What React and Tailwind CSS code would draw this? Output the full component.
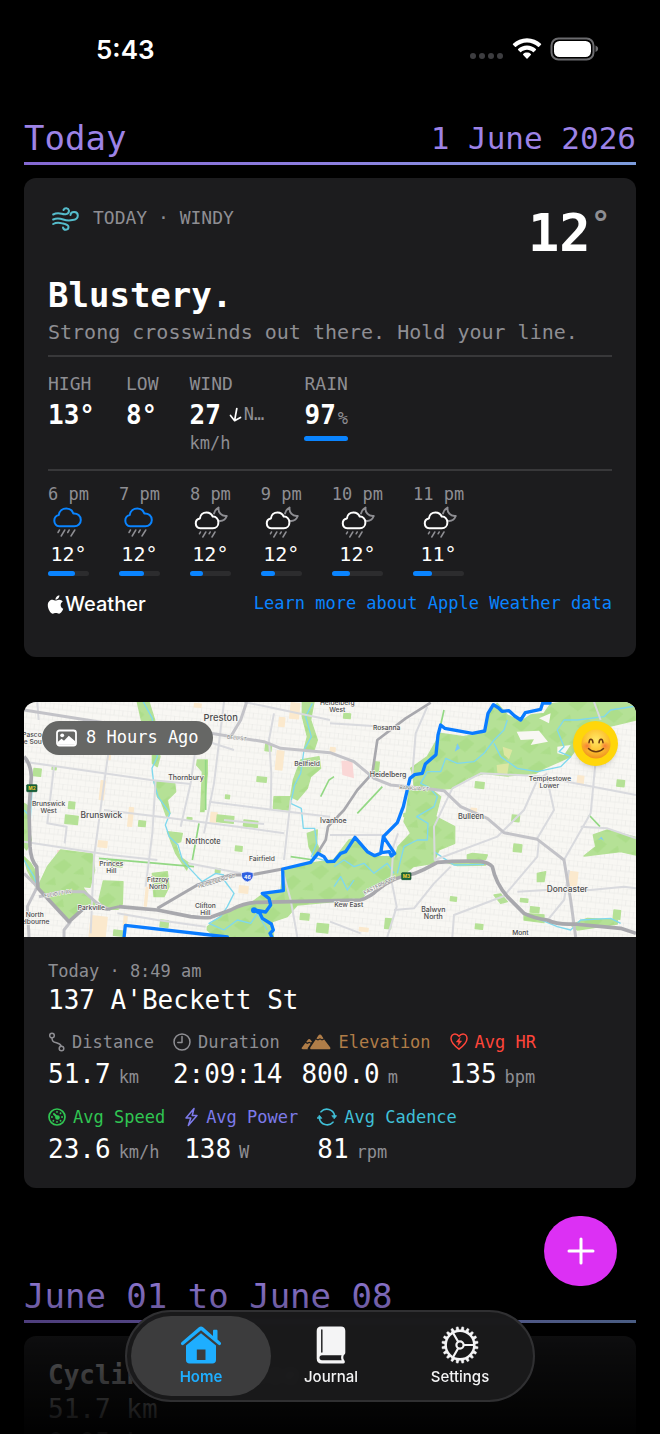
import React from "react";
import { FaApple } from "react-icons/fa";

const mono = "font-['DejaVu_Sans_Mono',monospace]";

const hours = [
  { time: "6 pm", temp: "12°", rain: 67, night: false },
  { time: "7 pm", temp: "12°", rain: 62, night: false },
  { time: "8 pm", temp: "12°", rain: 31, night: true },
  { time: "9 pm", temp: "12°", rain: 35, night: true },
  { time: "10 pm", temp: "12°", rain: 35, night: true },
  { time: "11 pm", temp: "11°", rain: 37, night: true },
];

function StatusBar() {
  return (
    <div className="flex h-[98px] shrink-0 items-center justify-between pr-[60px] pl-24">
      <span className="font-[Inter,sans-serif] text-[26px] font-semibold text-white">5:43</span>
      <div className="flex items-center gap-2">
        <svg width="36" height="24" viewBox="0 0 36 24" className="fill-[#3d3d40]" aria-hidden="true">
          <circle cx="5" cy="19" r="3" />
          <circle cx="14" cy="19" r="3" />
          <circle cx="23" cy="19" r="3" />
          <circle cx="32" cy="19" r="3" />
        </svg>
        <svg width="30" height="24" viewBox="0 0 30 24" className="fill-white" aria-hidden="true">
          <path d="M15 1.2c5.500 0 10.400 2.100 14 5.600.3.300.3.700 0 1l-2 2c-.3.300-.7.300-1 0C23 7 19.200 5.400 15 5.400S7 7 4 9.800c-.3.300-.7.300-1 0l-2-2c-.3-.3-.3-.7 0-1C4.600 3.300 9.500 1.200 15 1.200z" />
          <path d="M15 8.500c3.400 0 6.500 1.300 8.900 3.500.3.300.3.700 0 1l-2.100 2.100c-.3.300-.6.300-.9 0-1.600-1.400-3.600-2.300-5.900-2.300s-4.300.9-5.900 2.300c-.3.300-.6.300-.9 0L6.100 13c-.3-.3-.3-.7 0-1 2.400-2.200 5.500-3.500 8.900-3.500z" />
          <path d="M15 15.500c1.500 0 2.800.5 3.800 1.400.3.300.3.700 0 1l-3.300 3.500c-.3.300-.7.300-1 0l-3.300-3.500c-.3-.3-.3-.7 0-1 1-.9 2.300-1.400 3.800-1.400z" />
        </svg>
        <svg width="50" height="24" viewBox="0 0 50 24" aria-hidden="true">
          <rect x="1.500" y="1.500" width="42" height="21" rx="7" fill="none" stroke="#6b6b6e" strokeWidth="2" />
          <rect x="4" y="4" width="37" height="16" rx="5.500" fill="#fff" />
          <path d="M45.500 8.500c2 .8 2.600 2 2.600 3.200s-.6 2.400-2.600 3.200z" fill="#6b6b6e" />
        </svg>
      </div>
    </div>
  );
}

function SectionHeader({ title, aside }) {
  return (
    <header>
      <div className="flex h-10 items-center justify-between text-[#9d83e6]">
        <h2 className="text-[34px] leading-10">{title}</h2>
        {aside && <span className="text-[31px] leading-10">{aside}</span>}
      </div>
      <div className="mt-1 h-[3px] bg-linear-to-r from-[#8468d2] via-[#8d7fe0] to-[#7c9cdc]" />
    </header>
  );
}

function WindIcon() {
  return (
    <svg width="27" height="25" viewBox="0 0 27 25" fill="none" stroke="#55bccb" strokeWidth="2" strokeLinecap="round" strokeLinejoin="round" aria-hidden="true">
      <path d="M1.200 8.500c3-1.600 6-1.400 8.500-.7 2.500.7 7.300 1.200 7.300-3.200A2.900 2.900 0 0 0 11.500 4" />
      <path d="M1.200 13.500c4-1.800 7-1 10 0 5 1.600 14.800 1.300 14.600-4 0-4.500-7-4.700-7.300-.5" />
      <path d="M1.200 18c3.500-2 6-1.600 9-.6 3.500.8 6.300 1.200 6.300 3.700 0 3.500-5 3.400-5.500.4" />
    </svg>
  );
}

function RainIcon({ night }) {
  if (night) {
    return (
      <svg width="36" height="32" viewBox="0 0 36 32" fill="none" strokeLinecap="round" strokeLinejoin="round" aria-hidden="true">
        <path d="M22 7.500c.6-2.500 2.300-4.700 4.600-5.900-.8 4.500 2.600 9 8.200 8.400-1.300 3.200-4.300 5.200-7.500 4.900" stroke="#8e8e93" strokeWidth="1.900" />
        <path d="M8.300 22.300a5 5 0 0 1-.4-9.900c.4-3.700 3.200-6 6.500-6 3 0 5.400 1.700 6.300 4.200 3.200-.3 5.700 2.300 5.700 5.800 0 3.400-2.400 5.900-5.600 5.900z" stroke="#fff" strokeWidth="2" />
        <path d="M8.500 26l-1.100 1.800M13.800 26l-3 5M18.200 26l-1.100 1.800M23 26l-3 5" stroke="#8e8e93" strokeWidth="1.500" />
      </svg>
    );
  }
  return (
    <svg width="36" height="32" viewBox="0 0 36 32" fill="none" strokeLinecap="round" strokeLinejoin="round" aria-hidden="true">
      <path d="M9.300 20.300a5.700 5.700 0 0 1-.6-11.200C9.200 5 12.500 2.500 16.300 2.500c3.500 0 6 2 7 4.900 4.200-.3 7.500 2.600 7.500 6.500 0 3.700-2.900 6.400-6.500 6.400z" stroke="#0a84ff" strokeWidth="2" />
      <path d="M9.500 24l-1.500 2.500M14.800 24l-3.600 6M19.200 24l-1.500 2.500M24.800 24l-3.800 6" stroke="#8e8e93" strokeWidth="1.500" />
    </svg>
  );
}

function WeatherCard() {
  return (
    <section className="mt-[13px] rounded-xl bg-[#1c1c1e] px-6 pt-6 pb-[41px]">
      <div className="flex h-[69px] items-start justify-between">
        <div className="flex h-8 items-center gap-[14px] pl-1">
          <WindIcon />
          <span className="text-lg text-[#8e8e93]">TODAY · WINDY</span>
        </div>
        <div className="flex items-start pr-px">
          <span className="text-[52px] leading-[62px] font-bold text-white">12</span>
          <span className="mt-px text-[34px] leading-10 font-bold text-[#8e8e93]">°</span>
        </div>
      </div>
      <h3 className="text-[34px] leading-[48px] font-bold text-white">Blustery.</h3>
      <p className="text-xl leading-[26px] text-[#8e8e93]">Strong crosswinds out there. Hold your line.</p>
      <div className="mt-[10px] h-[2px] bg-[#38383a]" />

      <div className="mt-[15px] flex items-start gap-[31px]">
        <div>
          <div className="text-lg leading-6 text-[#8e8e93]">HIGH</div>
          <div className="text-[26px] leading-[38px] font-bold text-white">13°</div>
        </div>
        <div>
          <div className="text-lg leading-6 text-[#8e8e93]">LOW</div>
          <div className="text-[26px] leading-[38px] font-bold text-white">8°</div>
        </div>
        <div className="w-[84px]">
          <div className="text-lg leading-6 text-[#8e8e93]">WIND</div>
          <div className="flex items-center">
            <span className="text-[26px] leading-[38px] font-bold text-white">27</span>
            <svg width="14" height="16" viewBox="0 0 14 16" fill="none" stroke="#fff" strokeWidth="1.700" strokeLinecap="round" strokeLinejoin="round" className="ml-2 shrink-0" aria-hidden="true">
              <path d="M7.800 1.500L5.600 13.500M1.500 8.500l4.100 5.200 5.900-3.300" />
            </svg>
            <span className="ml-px text-[17px] text-[#8e8e93]">N…</span>
          </div>
          <div className="text-[17px] leading-[18px] text-[#8e8e93]">km/h</div>
        </div>
        <div>
          <div className="text-lg leading-6 text-[#8e8e93]">RAIN</div>
          <div className="flex items-baseline gap-[2px]">
            <span className="text-[26px] leading-[38px] font-bold text-white">97</span>
            <span className="text-[17px] leading-none text-[#8e8e93]">%</span>
          </div>
          <div className="mt-[2px] h-[5px] w-11 rounded-full bg-[#0a84ff]" />
        </div>
      </div>
      <div className="mt-[17px] h-[2px] bg-[#38383a]" />

      <ul className="mt-[11px] flex gap-[30px]">
        {hours.map((h) => (
          <li key={h.time} className="flex flex-col items-center">
            <span className="text-[17px] leading-6 text-[#8e8e93]">{h.time}</span>
            <RainIcon night={h.night} />
            <span className="text-xl leading-8 text-white">{h.temp}</span>
            <div className="mt-px h-[5px] w-full rounded-full bg-[#2c2c2e]">
              <div className="h-full rounded-full bg-[#0a84ff]" style={{ width: `${h.rain}%` }} />
            </div>
          </li>
        ))}
      </ul>

      <div className="mt-4 flex h-6 items-center justify-between">
        <div className="flex items-center text-white">
          <FaApple size={21} className="-mr-px -ml-[3px]" aria-hidden="true" />
          <span className="font-[Inter,sans-serif] text-xl leading-6 font-medium">Weather</span>
        </div>
        <a href="#weather-data" className="text-[17px] text-[#0a84ff]">Learn more about Apple Weather data</a>
      </div>
    </section>
  );
}

const parks = [
  "70,500 110,450 205,462 212,510 198,562 175,560 215,615 180,625 150,650 135,665 60,585 42,560",
  "238,543 297,545 295,612 282,628 245,628 225,600",
  "340,6 375,6 392,60 395,120 408,170 400,200 385,190 385,130 352,60",
  "390,245 452,248 455,275 430,300 438,340 428,350 412,305 400,290",
  "430,395 475,400 470,425 455,430 468,470 495,490 488,510 455,460",
  "385,520 430,515 435,560 420,590 390,590",
  "520,180 550,180 550,220 540,335 530,335 535,215 518,195",
  "835,6 870,6 860,60 880,120 870,150 840,150 850,110 835,50",
  "830,180 885,170 890,205 860,230 850,265 820,300 800,290 808,240",
  "750,290 798,290 795,330 748,325",
  "850,400 880,390 878,430 890,455 870,470 855,440",
  "550,680 600,640 680,610 720,580 770,575 778,510 870,488 930,478 975,420 993,415 1050,470 1108,470 1108,520 1060,550 1010,590 930,605 820,615 790,650 745,665 748,711 575,711 550,690",
  "1168,230 1160,205 1210,170 1250,100 1318,110 1385,98 1398,30 1420,10 1450,45 1490,65 1520,45 1560,40 1580,12 1620,6 1836,6 1836,60 1760,78 1690,90 1668,130 1640,170 1560,205 1535,220 1450,228 1380,220 1330,235 1285,265 1245,268 1220,262 1170,260",
  "1155,272 1218,265 1250,290 1235,350 1292,380 1292,430 1245,450 1228,490 1168,500 1130,530 1040,560 1010,600 980,590 1105,500 1122,440 1160,400 1140,365 1148,330",
  "1708,405 1750,390 1836,412 1836,465 1790,455 1680,468 1715,440",
  "0,310 15,320 12,370 22,420 8,450 0,440",
  "0,470 20,490 45,530 35,560 10,510",
  "1260,485 1380,485 1385,495 1300,497",
  "1500,640 1560,645 1560,668 1500,660",
  "1640,675 1690,655 1780,660 1780,672 1660,690",
  "1330,465 1345,460 1390,465 1385,478 1330,480",
  "1540,520 1565,515 1560,545 1540,545",
  "1410,585 1430,582 1450,605 1430,610",
];

const patches = [
  [30, 205, 22, 22], [125, 345, 38, 25], [135, 305, 18, 20], [345, 362, 20, 16], [580, 345, 50, 20],
  [660, 360, 42, 18], [725, 132, 18, 20], [700, 230, 28, 14], [635, 438, 20, 14], [262, 480, 34, 18],
  [575, 505, 14, 12], [490, 352, 14, 8], [250, 130, 10, 12], [605, 285, 12, 10], [410, 660, 24, 20],
  [270, 690, 30, 16], [190, 600, 14, 12], [830, 640, 26, 18], [880, 670, 34, 26], [1050, 185, 16, 34],
  [1355, 245, 26, 18], [1465, 345, 22, 18], [1470, 432, 24, 22], [1280, 590, 18, 12], [1490, 595, 22, 10],
  [1520, 620, 26, 16], [1770, 630, 20, 26], [1355, 672, 22, 14], [1780, 240, 22, 18], [1085, 655, 18, 30],
  [1575, 60, 12, 10], [1140, 340, 10, 10], [960, 40, 20, 14], [700, 470, 12, 10], [85, 200, 12, 8],
];

const sand = [
  [230, 240, 16, 60], [222, 420, 30, 22], [255, 110, 12, 70], [315, 320, 16, 60], [560, 335, 22, 36],
  [800, 6, 30, 50], [758, 150, 24, 60], [765, 50, 20, 30], [200, 645, 52, 66], [365, 560, 10, 60],
  [918, 140, 18, 16], [1340, 322, 20, 16], [1634, 512, 30, 46], [1660, 225, 22, 26], [1005, 680, 30, 14],
  [510, 8, 24, 14], [300, 640, 12, 40], [645, 555, 30, 24],
];

const labels = [
  [590, 64, 28, "Preston"], [486, 241, 21, "Thornbury"], [74, 319, 20, "Brunswick"], [74, 340, 20, "West"],
  [232, 355, 25, "Brunswick"], [537, 432, 22, "Northcote"], [714, 483, 20, "Fairfield"], [262, 499, 20, "Princes"],
  [262, 520, 20, "Hill"], [402, 546, 20, "Fitzroy"], [402, 567, 20, "North"], [202, 631, 20, "Parkville"],
  [544, 625, 20, "Clifton"], [544, 646, 20, "Hill"], [32, 651, 20, "North"], [34, 672, 20, "elbourne"],
  [24, 110, 20, "Pasco"], [24, 131, 20, "le Sou"], [849, 197, 20, "Bellfield"], [940, 16, 20, "Heidelberg"],
  [940, 37, 20, "West"], [1088, 90, 20, "Rosanna"], [1092, 230, 21, "Heidelberg"], [928, 368, 21, "Ivanhoe"],
  [1578, 242, 20, "Templestowe"], [1576, 265, 20, "Lower"], [1341, 358, 22, "Bulleen"], [974, 621, 20, "Kew East"],
  [1228, 635, 21, "Balwyn"], [1228, 657, 21, "North"], [1630, 577, 25, "Doncaster"], [1489, 705, 20, "Mont"],
];

const route =
  "M300 714 L304 676 L610 711 M745 714 L738 700 L748 690 L742 672 L715 655 L708 640 L690 630 M690 630 L725 636 L740 615 L735 595 L715 580 L778 572 L776 507 L860 487 L882 460 L900 470 L910 485 L930 484 L950 460 L965 455 L993 412 L1030 455 L1052 467 L1070 460 L1078 410 L1112 460 L1102 468 L1096 455 L1072 458 M1078 410 L1120 368 L1138 320 L1158 235 L1172 224 L1195 220 L1204 192 L1222 176 L1236 164 L1242 105 L1250 75 L1262 85 L1345 100 L1382 93 L1392 40 L1408 14 L1424 24 L1434 34 L1455 32 L1472 48 L1490 60 L1504 38 L1550 28 L1556 9 L1578 9";

function RouteMap() {
  return (
    <svg viewBox="0 6 1836 705" className="block w-full" role="img" aria-label="Ride route">
      <defs>
        <pattern id="streets" width="26" height="34" patternUnits="userSpaceOnUse" patternTransform="rotate(6)">
          <path d="M0 0H26M0 17H26M0 0V34M13 0V17" stroke="#e9e9e7" strokeWidth="2" />
        </pattern>
        <pattern id="foliage" width="90" height="70" patternUnits="userSpaceOnUse" patternTransform="rotate(-20)">
          <path d="M0 10L40 0L55 25L20 40ZM50 50L85 40L80 65Z" fill="#a9dc86" />
        </pattern>
      </defs>
      <rect y="6" width="1836" height="705" fill="#f8f7f3" />
      <rect y="6" width="1836" height="705" fill="url(#streets)" />
      <g fill="#fbe9cd">
        {sand.map(([x, y, w, h]) => <rect key={`${x}-${y}`} x={x} y={y} width={w} height={h} rx="2" transform={`rotate(6 ${x} ${y})`} />)}
      </g>
      <path d="M100 450L122 450L115 478L98 472ZM952 182L985 182L990 235L955 225ZM118 625L132 620L134 645L120 650Z" fill="#fad7d6" />
      <g fill="#b5e196" stroke="#b5e196" strokeWidth="4" strokeLinejoin="round">
        {parks.map((p) => <polygon key={p} points={p} />)}
        {patches.map(([x, y, w, h]) => <rect key={`${x}-${y}`} x={x} y={y} width={w} height={h} transform={`rotate(6 ${x} ${y})`} />)}
      </g>
      <g fill="url(#foliage)" opacity="0.7">
        {parks.map((p) => <polygon key={p} points={p} />)}
      </g>
      <path d="M1478 95L1545 92L1572 125L1520 135L1530 118L1490 120ZM1545 55L1580 40L1575 70ZM1600 140L1640 135L1620 165L1600 160Z" fill="#f8f7f3" />
      <path d="M1436 140L1465 150L1455 178L1440 165ZM1418 195L1455 190L1450 222L1420 218Z" fill="#dbe7a2" />
      <g fill="none" stroke="#93d884" strokeWidth="5">
        <path d="M545 180L545 330M505 480L525 370M225 475L400 490L510 500M1000 340L1075 260M1695 345L1728 380M800 470L870 480M890 290L915 240L930 230M1260 30L1250 75" />
      </g>
      <g fill="none" stroke="#7fd8ee" strokeWidth="4" strokeLinejoin="round">
        <path d="M358 6L385 55L388 120L400 170L384 205L388 240L402 290L438 340L424 375L436 410L462 435L475 480L492 500L520 530L535 545L575 520L600 525" />
        <path d="M865 10L845 50L862 110L840 150L830 220L812 255L800 310L832 325L838 385L872 385L878 430L862 470L915 485" />
        <path d="M600 540L630 580L610 620L590 650L555 670L600 690L640 660L680 670L700 640L730 690" />
        <path d="M930 500L960 480L990 500L1020 490L1050 520L1090 490L1110 520M930 560L950 530L970 570L990 540" />
        <path d="M1120 520L1140 440L1180 420L1210 420L1212 370L1178 350L1230 320L1240 290L1215 262L1190 250L1210 215L1250 215L1265 175L1300 190L1350 185L1380 160L1410 120L1440 90L1450 60" />
        <path d="M1410 130L1430 170L1480 205L1540 215L1610 200L1640 170L1605 155L1620 140L1600 90L1620 60L1660 60L1740 50L1760 30L1836 18" />
        <path d="M1230 455L1260 475L1290 495L1380 493M1540 655L1600 680L1640 690L1670 660L1760 655L1790 670M24 270L16 410M0 480L30 530L40 560M0 330L14 345" />
      </g>
      <path d="M1300 130L1308 145L1292 155ZM1722 420L1732 410L1740 422L1730 416Z" fill="#7cc9f5" />
      <g fill="none" stroke="#d9dade" strokeWidth="6" strokeLinejoin="round">
        <path d="M0 185L380 240L500 252M0 425L260 465L400 480M240 330L420 352L640 380L780 400M555 305L750 330L918 350" />
        <path d="M380 70L630 150M200 700L210 470L250 180L262 110M365 560L385 400L395 240M470 380L500 250L520 110M540 400L570 250L600 6M780 480L800 300M740 330L742 220L735 120L750 40M820 711L800 600L778 520" />
        <path d="M492 490L650 520M280 640L400 660L545 680M1090 711L1118 620L1102 540L1108 440L1122 400M40 6L44 60M90 200L70 370L128 380L122 430M600 360L720 372M660 6L730 20L918 60" />
        <path d="M918 70L1080 80M918 405L1080 405M1165 225L1175 100L1210 20M1285 265L1230 380L1232 480L1420 410L1500 330L1540 240L1570 220M1285 265L1370 220L1540 228L1836 285" />
        <path d="M1540 415L1590 330L1570 240M1620 480L1700 340L1715 180M1480 575L1600 568L1700 570L1800 560L1836 565M1285 711L1290 645L1440 588L1540 470L1545 420M1110 630L1170 625L1230 550L1280 500M1670 380L1750 385L1836 415M1575 655L1620 600L1635 510M1710 6L1730 60M918 665L1010 700" />
      </g>
      <g fill="none" stroke="#c3c3c8" strokeWidth="9" strokeLinejoin="round">
        <path d="M0 30L250 70M560 100L720 125L770 145L918 158L990 185L1050 235L1100 255L1200 265L1260 272L1310 320L1390 355L1440 398L1540 418L1620 480L1640 600L1655 711" />
        <path d="M620 110L650 60L668 6M45 590L110 575L180 575L220 610L260 630M0 520L40 560L10 620L15 711M140 665L120 690L120 711" />
      </g>
      <g fill="none" stroke="#a8a8ad" strokeLinejoin="round">
        <path d="M1220 8L1145 55L1060 120L1045 220L1000 270L960 330L912 380L905 420L880 460" strokeWidth="8" />
        <path d="M400 625L520 555L620 525L680 525L776 507" strokeWidth="9" />
        <path d="M0 170Q20 190 22 230L15 330L18 440Q20 480 38 500L42 565L135 665L185 620M285 620L400 630L500 650Q540 655 560 652L620 630Q660 608 700 607L800 605L1010 600Q1040 590 1060 570Q1110 530 1165 522Q1180 520 1240 487Q1300 482 1370 484Q1395 488 1405 500Q1415 550 1450 590L1500 640Q1530 655 1570 660Q1600 675 1650 672L1790 685L1836 700" strokeWidth="11" />
        <path d="M185 620L250 628L285 620" strokeWidth="8" />
      </g>
      <path d={route} fill="none" stroke="#0a7cff" strokeWidth="10" strokeLinejoin="round" strokeLinecap="round" />
      <circle cx="690" cy="631" r="9" fill="#0a7cff" />
      <g className="font-[Inter,sans-serif]" fill="#737376" stroke="#f8f7f3" strokeWidth="3" paintOrder="stroke" fontSize="15" textAnchor="middle">
        <text transform="translate(103 586) rotate(-10)">ELLIOTT AV</text>
        <text transform="translate(580 548) rotate(-17)">HEIDELBERG RD</text>
        <text transform="translate(638 119) rotate(7)">BELL ST</text>
        <text transform="translate(1170 270) rotate(4)">BANKSIA ST</text>
        <text transform="translate(1070 560) rotate(-27)">EASTERN FWY</text>
      </g>
      <g className="font-[Inter,sans-serif]" fill="#4b4b4e" stroke="#f8f7f3" strokeWidth="4" paintOrder="stroke" textAnchor="middle" fontWeight="500">
        {labels.map(([x, y, size, text]) => <text key={`${x}-${y}`} x={x} y={y} fontSize={size}>{text}</text>)}
      </g>
      <g className="font-[Inter,sans-serif]" fontWeight="700" textAnchor="middle">
        <rect x="8" y="254" width="31" height="21" rx="2" fill="#17643a" stroke="#0e4d2b" strokeWidth="2" />
        <text x="24" y="270" fontSize="14" fill="#f6cd33">M2</text>
        <rect x="1133" y="518" width="28" height="21" rx="2" fill="#17643a" stroke="#0e4d2b" strokeWidth="2" />
        <text x="1147" y="534" fontSize="14" fill="#f6cd33">M3</text>
        <path d="M653 518Q670 512 687 518Q692 538 670 546Q648 538 653 518Z" fill="#2f5fe0" stroke="#fff" strokeWidth="2" />
        <text x="670" y="536" fontSize="15" fill="#fff">46</text>
      </g>
    </svg>
  );
}

function SmileFace() {
  return (
    <svg width="30" height="30" viewBox="0 0 30 30" aria-label="Smiling" role="img">
      <defs>
        <radialGradient id="face" cx="50%" cy="35%" r="68%">
          <stop offset="0" stopColor="#ffe768" />
          <stop offset="0.6" stopColor="#fdc22f" />
          <stop offset="1" stopColor="#ee8a1e" />
        </radialGradient>
        <radialGradient id="blush">
          <stop offset="0" stopColor="#f5713a" stopOpacity="0.85" />
          <stop offset="1" stopColor="#f5713a" stopOpacity="0" />
        </radialGradient>
      </defs>
      <circle cx="15" cy="15" r="14.500" fill="url(#face)" />
      <circle cx="6" cy="17" r="5" fill="url(#blush)" />
      <circle cx="24" cy="17" r="5" fill="url(#blush)" />
      <path d="M8 13.800c.3-4.700 3.500-4.700 4 0M18 13.800c.5-4.700 3.700-4.700 4 0M7.500 19.500c4 4.300 11 4.300 15 0" fill="none" stroke="#6b3a10" strokeWidth="1.500" strokeLinecap="round" />
    </svg>
  );
}

const stroke = { fill: "none", stroke: "currentColor", strokeWidth: 1.5, strokeLinecap: "round", strokeLinejoin: "round", "aria-hidden": true };

const icons = {
  distance: (
    <svg width="17" height="20" viewBox="0 0 17 20" {...stroke}>
      <circle cx="4" cy="3.500" r="2.300" />
      <circle cx="13.500" cy="16.500" r="2.300" />
      <path d="M4 5.800c0 3.500 1 4.200 4.500 5 3.300.8 4 1.300 4.700 3.400" />
    </svg>
  ),
  duration: (
    <svg width="18" height="20" viewBox="0 0 18 20" {...stroke}>
      <circle cx="9" cy="10" r="8" />
      <path d="M9 4.500V10.500H4.800" />
    </svg>
  ),
  elevation: (
    <svg width="30" height="20" viewBox="0 0 30 20" fill="currentColor" aria-hidden="true">
      <path d="M19 2.600c.7 0 1.200.4 1.600 1l1.900 2.900-1.500.8-2-1.100-2 1.100-1.600-.8 2-2.900c.4-.6.900-1 1.600-1z" />
      <path d="M14.700 7.500l2.300 1.100 2-1.100 2 1.100 2.200-1 5.900 7.600c.8 1.100.1 2.100-1.200 2.100H10.600c-1.300 0-1.900-1-1.100-2.100z" />
      <path d="M8.200 7c.6 0 1 .4 1.300.8l1.500 1.900-1.100.9-1.700-.9-1.800.9-1.200-.6 1.700-2.200c.3-.4.700-.8 1.300-.8z" />
      <path d="M4.400 11l2 .9 1.800-.9 1.500.8-2.600 3.600c-.5.800-.5 1.400-.2 1.900H1.900c-1.200 0-1.600-.9-1-1.700z" />
    </svg>
  ),
  heart: (
    <svg width="18" height="20" viewBox="0 0 18 20" {...stroke}>
      <path d="M9 4.300C7.900 2.800 6.500 2.100 5 2.100 2.700 2.100 1 4 1 6.500c0 4.200 4.200 7.800 8 10.700 3.800-2.900 8-6.500 8-10.700 0-2.500-1.700-4.400-4-4.400-1.500 0-2.900.7-4 2.200z" />
      <path d="M10 5.500L6.300 10h2.400L8 13.500 11.700 9H9.300z" fill="currentColor" strokeWidth="0.500" />
    </svg>
  ),
  speed: (
    <svg width="18" height="20" viewBox="0 0 18 20" {...stroke} strokeWidth="1.700">
      <circle cx="9" cy="10" r="8" />
      <path d="M6 7l3 3" strokeWidth="2" />
      <circle cx="9.500" cy="10.500" r="1.500" fill="currentColor" />
      <path d="M9 4.800v.1M12.500 6.300l.1-.1M14 10h.1M3.900 10h.1M12.500 13.700l.1.100M5.400 13.700l-.1.100M9 14.800v.1" strokeWidth="1.800" />
    </svg>
  ),
  power: (
    <svg width="15" height="20" viewBox="0 0 15 20" {...stroke}>
      <path d="M10 1.500L2 11h4.800L4.300 18.500 13 8.500H8.200z" />
    </svg>
  ),
  cadence: (
    <svg width="20" height="20" viewBox="0 0 20 20" {...stroke} strokeWidth="1.600">
      <path d="M4 4.800A7.900 7.900 0 0 1 17.600 8.500M16 15.200A7.900 7.900 0 0 1 2.400 11.500" />
      <path d="M15.200 8.700h4.400l-2.200 2.800zM.4 11.300h4.400L2.600 8.500z" fill="currentColor" strokeWidth="0.800" />
    </svg>
  ),
};

const metricRows = [
  [
    { icon: "distance", label: "Distance", value: "51.7", unit: "km", color: "text-[#8e8e93]" },
    { icon: "duration", label: "Duration", value: "2:09:14", unit: "", color: "text-[#8e8e93]" },
    { icon: "elevation", label: "Elevation", value: "800.0", unit: "m", color: "text-[#b07d48]" },
    { icon: "heart", label: "Avg HR", value: "135", unit: "bpm", color: "text-[#ff453a]" },
  ],
  [
    { icon: "speed", label: "Avg Speed", value: "23.6", unit: "km/h", color: "text-[#30c552]" },
    { icon: "power", label: "Avg Power", value: "138", unit: "W", color: "text-[#7d7aea]" },
    { icon: "cadence", label: "Avg Cadence", value: "81", unit: "rpm", color: "text-[#40c0d8]" },
  ],
];

function RideCard() {
  return (
    <section className="mt-[45px] overflow-hidden rounded-xl bg-[#1c1c1e]">
      <div className="relative">
        <RouteMap />
        <div className="absolute top-[19px] left-[18px] flex h-[34px] items-center gap-[9px] rounded-full bg-[#666765] px-[14px] text-white">
          <svg width="21" height="18" viewBox="0 0 21 18" aria-hidden="true">
            <rect x="1" y="1.500" width="19" height="15" rx="2.500" fill="none" stroke="#fff" strokeWidth="1.800" />
            <circle cx="6.200" cy="6.300" r="1.900" fill="#fff" />
            <path d="M2 15v-2.200l3.500-3 2.500 2 4.800-5 6.400 5.500V15.800H2z" fill="#fff" />
          </svg>
          <span className="text-[17px]">8 Hours Ago</span>
        </div>
        <div className="absolute top-[19px] right-[18px] flex size-[45px] items-center justify-center rounded-full bg-[#ffd60a] shadow-md">
          <SmileFace />
        </div>
      </div>
      <div className="px-6 pt-[22px] pb-[19px]">
        <p className="text-[17px] leading-6 text-[#8e8e93]">Today · 8:49 am</p>
        <h3 className="text-[26px] leading-[34px] text-white">137 A'Beckett St</h3>
        <div className="mt-[13px] flex flex-col gap-[11px]">
          {metricRows.map((row) => (
            <dl key={row[0].label} className="flex gap-[19px]">
              {row.map((m) => (
                <div key={m.label}>
                  <dt className={`flex items-center gap-[7px] text-[17px] leading-6 ${m.color}`}>
                    {icons[m.icon]}
                    {m.label}
                  </dt>
                  <dd className="flex items-baseline gap-2 text-[26px] leading-10 text-white">
                    {m.value}
                    {m.unit && <span className="text-[17px] leading-none text-[#8e8e93]">{m.unit}</span>}
                  </dd>
                </div>
              ))}
            </dl>
          ))}
        </div>
      </div>
    </section>
  );
}

function HomeIcon() {
  return (
    <svg width="42" height="38" viewBox="0 0 42 38" fill="currentColor" aria-hidden="true">
      <path d="M21 0.500c.8 0 1.500.3 2.100.8l9.900 8.700V5c0-.8.400-1.200 1.200-1.200h2.100c.8 0 1.200.4 1.200 1.200v8.600l3 2.700c1.600 1.500-.3 3.800-2 2.400L21 4.300 3.500 18.700c-1.700 1.400-3.600-.9-2-2.400L18.900 1.300C19.500.8 20.200.5 21 .5z" />
      <path fillRule="evenodd" d="M21 7.200l15 12.400V34c0 2.200-1.300 3.500-3.500 3.500h-23C7.300 37.500 6 36.200 6 34V19.600zM16.800 23.500V34h8.700V23.500z" />
    </svg>
  );
}

function JournalIcon() {
  return (
    <svg width="30" height="38" viewBox="0 0 30 38" aria-hidden="true">
      <path fill="currentColor" d="M5 0.500h20c2.800 0 4.300 1.500 4.300 4.300V26.500c0 1.200-.5 2-1.500 2.400-.8 1.800-.7 4 .6 5.700.9 1.500.5 2.900-1.200 2.900H5.500C2.300 37.500.7 35.700.7 32.500V5C.7 2 2.200.5 5 .5z" />
      <path d="M5.800 4V26" stroke="#242426" strokeWidth="1.500" strokeLinecap="round" />
      <path d="M6 29.300H25.500c-.6 1.600-.5 3.300.2 4.900H6c-1.600 0-2.500-1-2.500-2.400S4.400 29.300 6 29.300z" fill="#1c1c1e" />
    </svg>
  );
}

function SettingsIcon() {
  const teeth = Array.from({ length: 20 }, (_, i) => i * 18);
  return (
    <svg width="38" height="38" viewBox="0 0 38 38" fill="none" stroke="currentColor" aria-hidden="true">
      <circle cx="19" cy="19" r="14.300" strokeWidth="2.400" />
      <circle cx="19" cy="19" r="3.600" strokeWidth="2.200" />
      <path d="M22.800 19H33M17.200 15.700L11.800 6.500M17.200 22.300L11.800 31.500" strokeWidth="2.200" />
      {teeth.map((a) => <path key={a} d="M17.500 4.300L18 .8H20L20.500 4.300Z" fill="currentColor" strokeWidth="0.400" transform={`rotate(${a + 9} 19 19)`} />)}
    </svg>
  );
}

function TabBar() {
  const item = "flex h-20 shrink-0 cursor-pointer flex-col items-center justify-center gap-[3px] rounded-[40px] pt-px text-[15px] leading-5 font-medium";
  return (
    <nav className="absolute bottom-8 left-1/2 flex h-[92px] w-[410px] -translate-x-1/2 items-center rounded-[46px] border-2 border-[#303032] bg-[#1a1a1b]/95 px-1 font-[Inter,sans-serif] backdrop-blur-[3px]">
      <button type="button" aria-current="page" className={`${item} w-[140px] bg-[#3c3c3d] font-semibold text-[#1eaeff]`}>
        <HomeIcon />
        Home
      </button>
      <button type="button" className={`${item} w-30 text-[#f4f4f5]`}>
        <JournalIcon />
        Journal
      </button>
      <button type="button" className={`${item} w-[138px] text-[#f4f4f5]`}>
        <SettingsIcon />
        Settings
      </button>
    </nav>
  );
}

export default function App() {
  return (
    <div className={`relative flex h-screen flex-col overflow-hidden bg-black ${mono}`}>
      <StatusBar />
      <main className="min-h-0 flex-1 overflow-y-auto px-6 pt-5 [scrollbar-width:none]">
        <SectionHeader title="Today" aside="1 June 2026" />
        <WeatherCard />
        <RideCard />
        <div className="mt-[88px]">
          <SectionHeader title="June 01 to June 08" />
          <section className="mt-[13px] rounded-xl bg-[#1c1c1e] px-6 py-[22px] text-[26px] leading-[34px] text-[#c8c8cc]">
            <h3 className="font-bold">Cycling Distance</h3>
            <p>51.7 km</p>
            <p>0.05 km</p>
          </section>
        </div>
      </main>
      <div className="pointer-events-none absolute inset-x-0 bottom-0 h-[170px] bg-linear-to-b from-transparent via-black/60 via-50% to-black/95" />
      <button type="button" aria-label="Add ride" className="absolute right-[43px] bottom-[148px] flex h-[70px] w-[73px] cursor-pointer items-center justify-center rounded-full bg-[#dc30f4]">
        <svg width="28" height="28" viewBox="0 0 28 28" stroke="#fff" strokeWidth="3" strokeLinecap="round" aria-hidden="true">
          <path d="M14 2V26M2 14H26" />
        </svg>
      </button>
      <TabBar />
    </div>
  );
}
